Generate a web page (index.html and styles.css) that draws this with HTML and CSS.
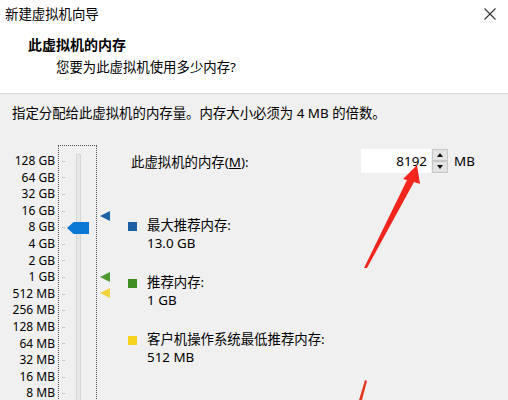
FILE: index.html
```html
<!DOCTYPE html>
<html lang="zh-CN">
<head>
  <meta charset="UTF-8">
  <title>新建虚拟机向导</title>
  <link rel="stylesheet" href="styles.css">
</head>
<body>
  <div class="window">
    <div class="titlebar">
      <span class="title">新建虚拟机向导</span>
      <svg class="close" viewBox="0 0 12 12" stroke="#333" stroke-width="1.1">
        <line x1="0.5" y1="0.5" x2="11.5" y2="11.5"></line>
        <line x1="11.5" y1="0.5" x2="0.5" y2="11.5"></line>
      </svg>
    </div>

    <div class="header">
      <h1>此虚拟机的内存</h1>
      <p>您要为此虚拟机使用多少内存?</p>
    </div>

    <div class="content">
      <p class="hint">指定分配给此虚拟机的内存量。内存大小必须为 4 MB 的倍数。</p>

      <div class="memory">
        <ul class="scale">
          <li>128 GB</li>
          <li>64 GB</li>
          <li>32 GB</li>
          <li>16 GB</li>
          <li>8 GB</li>
          <li>4 GB</li>
          <li>2 GB</li>
          <li>1 GB</li>
          <li>512 MB</li>
          <li>256 MB</li>
          <li>128 MB</li>
          <li>64 MB</li>
          <li>32 MB</li>
          <li>16 MB</li>
          <li>8 MB</li>
        </ul>

        <div class="slider">
          <div class="ticks">
            <span></span><span></span><span></span><span></span>
            <span></span><span></span><span></span><span></span>
            <span></span><span></span><span></span><span></span>
            <span></span><span></span><span></span>
          </div>
          <div class="track"></div>
          <div class="thumb"></div>
        </div>

        <div class="markers">
          <span class="marker max"></span>
          <span class="marker recommended"></span>
          <span class="marker minimum"></span>
        </div>

        <div class="settings">
          <div class="field">
            <span class="field-label">此虚拟机的内存(<u>M</u>):</span>
            <div class="spin-value">8192</div>
            <div class="spin-buttons">
              <span class="spin-btn up"></span>
              <span class="spin-btn down"></span>
            </div>
            <span class="unit">MB</span>
          </div>

          <div class="legend">
            <div class="legend-item">
              <span class="swatch max"></span>
              <div>
                <div>最大推荐内存:</div>
                <div>13.0 GB</div>
              </div>
            </div>
            <div class="legend-item">
              <span class="swatch recommended"></span>
              <div>
                <div>推荐内存:</div>
                <div>1 GB</div>
              </div>
            </div>
            <div class="legend-item">
              <span class="swatch minimum"></span>
              <div>
                <div>客户机操作系统最低推荐内存:</div>
                <div>512 MB</div>
              </div>
            </div>
          </div>
        </div>
      </div>
    </div>

    <!-- red annotation arrows drawn over the dialog -->
    <svg class="annotation" viewBox="0 0 508 400">
      <polygon fill="#f2261c" points="364,268 407,180 403,179 417,165 420,184 414,182 367,268"></polygon>
      <polygon fill="#e8361e" points="365,380 367,381 362,400 359,400"></polygon>
    </svg>
  </div>
</body>
</html>
```

FILE: styles.css
```css
* {
  margin: 0;
  padding: 0;
  box-sizing: border-box;
}

body {
  font-family: "Noto Sans", "Noto Sans CJK SC", sans-serif;
  font-size: 13.4px;
  color: #000;
  background: #f0f0f0;
}

.window {
  position: relative;
  width: 508px;
  height: 400px;
  overflow: hidden;
  background: #f0f0f0;
}

.titlebar {
  display: flex;
  align-items: center;
  justify-content: space-between;
  height: 27px;
  padding: 0 12px 0 5px;
  background: #fff;
}

.title {
  line-height: 26px;
}

.close {
  width: 12px;
  height: 12px;
}

.header {
  height: 67px;
  padding: 9px 0 0 28px;
  background: #fff;
  border-bottom: 1px solid #d9d9d9;
}

.header h1 {
  font-size: 14px;
  font-weight: 700;
  line-height: 18px;
}

.header p {
  margin-top: 4px;
  padding-left: 28px;
  line-height: 18px;
}

.content {
  padding: 10px 0 0 12px;
}

.hint {
  line-height: 18px;
}

.memory {
  display: grid;
  grid-template-columns: 46px 39px 31px 1fr;
  margin-top: 23px;
}

.scale {
  list-style: none;
  padding: 8px 3px 0 0;
  text-align: right;
  font-size: 12px;
  line-height: 16.6px;
}

.slider {
  position: relative;
  display: flex;
  border: 1px dotted #555;
  height: 300px;
}

.ticks {
  padding: 7px 0 0 3px;
}

.ticks span {
  display: flex;
  align-items: center;
  height: 16.6px;
}

.ticks span::before {
  content: "";
  width: 3px;
  height: 1px;
  background: #c4c4c4;
}

.track {
  width: 5px;
  margin: 8px 0 0 11px;
  border: 1px solid #d6d6d6;
  background: #e7e7e7;
}

.thumb {
  position: absolute;
  left: 8px;
  top: 76px;
  width: 22px;
  height: 12px;
  background: #0a78d4;
  clip-path: polygon(0 50%, 30% 0, 100% 0, 100% 100%, 30% 100%);
}

.markers {
  position: relative;
}

.marker {
  position: absolute;
  left: 3px;
  width: 10px;
  height: 10px;
  clip-path: polygon(0 50%, 100% 0, 100% 100%);
}

.marker.max {
  top: 66px;
  background: #1b63a8;
}

.marker.recommended {
  top: 127px;
  background: #4d9a2e;
}

.marker.minimum {
  top: 143px;
  background: #f4d23a;
}

.field {
  display: grid;
  grid-template-columns: 233px 70px 17px auto;
  align-items: center;
  margin-top: 4px;
  height: 24px;
}

.field-label {
  padding-left: 3px;
}

.spin-value {
  height: 24px;
  padding-right: 4px;
  line-height: 24px;
  text-align: right;
  background: #fff;
}

.spin-buttons {
  display: flex;
  flex-direction: column;
  height: 24px;
  padding-left: 1px;
}

.spin-btn {
  position: relative;
  flex: 1;
  background: #e3e3e3;
  border: 1px solid #c8c8c8;
}

.spin-btn::after {
  content: "";
  position: absolute;
  left: 4px;
  top: 3px;
  border-left: 3.5px solid transparent;
  border-right: 3.5px solid transparent;
}

.spin-btn.up::after {
  border-bottom: 4px solid #111;
}

.spin-btn.down::after {
  border-top: 4px solid #111;
}

.unit {
  padding-left: 6px;
}

.legend {
  display: flex;
  flex-direction: column;
  gap: 22px;
  margin-top: 44px;
}

.legend-item {
  display: flex;
  gap: 10px;
  line-height: 17.5px;
}

.swatch {
  flex: none;
  width: 9px;
  height: 9px;
  margin-top: 4.5px;
}

.swatch.max {
  background: #1a5fa3;
}

.swatch.recommended {
  background: #3e8e24;
}

.swatch.minimum {
  background: #f8d31c;
}

.annotation {
  position: absolute;
  top: 0;
  left: 0;
  width: 508px;
  height: 400px;
  pointer-events: none;
}
```
